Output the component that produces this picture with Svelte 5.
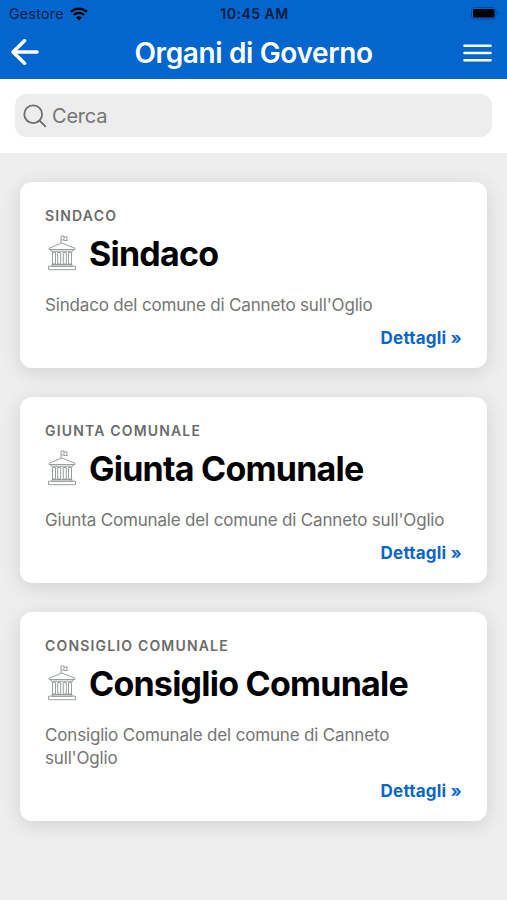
<script>
  const organi = [
    {
      categoria: "Sindaco",
      titolo: "Sindaco",
      descrizione: "Sindaco del comune di Canneto sull'Oglio"
    },
    {
      categoria: "Giunta Comunale",
      titolo: "Giunta Comunale",
      descrizione: "Giunta Comunale del comune di Canneto sull'Oglio"
    },
    {
      categoria: "Consiglio Comunale",
      titolo: "Consiglio Comunale",
      descrizione: "Consiglio Comunale del comune di Canneto sull'Oglio"
    }
  ];

  let cerca = $state("");

  let filtrati = $derived(
    organi.filter((o) => o.titolo.toLowerCase().includes(cerca.toLowerCase()))
  );
</script>

<main>
  <header class="header">
    <div class="status">
      <div class="status__carrier">
        <span>Gestore</span>
        <svg width="18" height="14" viewBox="0 0 18 14">
          <g fill="none" stroke="#000" stroke-width="2.3">
            <path d="M1 4.9a11.5 11.5 0 0 1 16 0" />
            <path d="M3.9 8a7.3 7.3 0 0 1 10.2 0" />
          </g>
          <path d="M9 13.6 6 10.6a4.3 4.3 0 0 1 6 0z" />
        </svg>
      </div>
      <span class="status__time">10:45 AM</span>
      <svg class="status__battery" width="29" height="13" viewBox="0 0 29 13">
        <rect x="0.5" y="0.5" width="24.5" height="11.6" rx="3" fill="none" stroke="#004a9c" />
        <rect x="2" y="2" width="21.5" height="8.6" rx="1.6" />
        <path d="M26.5 4.5q2 1.8 0 3.6z" fill="#003f85" />
      </svg>
    </div>
    <nav class="nav">
      <button class="nav__button" aria-label="Indietro">
        <svg width="28" height="26" viewBox="0 0 28 26">
          <path d="M13.500 1.800 2 13l11.500 11.200M2.500 13h23.500" fill="none" stroke="#fff" stroke-width="3.600" stroke-linecap="round" stroke-linejoin="round" />
        </svg>
      </button>
      <h1 class="nav__title">Organi di Governo</h1>
      <button class="nav__button nav__button--menu" aria-label="Menu">
        <svg width="29" height="18" viewBox="0 0 29 18">
          <path d="M1.500 1.800h26M1.500 9h26M1.500 16.200h26" stroke="#fff" stroke-width="2.600" stroke-linecap="round" />
        </svg>
      </button>
    </nav>
  </header>

  <div class="search">
    <label class="search__box">
      <svg width="24" height="24" viewBox="0 0 24 24">
        <g fill="none" stroke="#6e6e6e" stroke-width="1.800" stroke-linecap="round">
          <circle cx="10.200" cy="10.200" r="8.900" />
          <path d="m16.500 16.500 5.800 5.800" />
        </g>
      </svg>
      <input class="search__input" type="text" placeholder="Cerca" bind:value={cerca} />
    </label>
  </div>

  <section class="cards">
    {#each filtrati as organo}
      <article class="card">
        <h3 class="card__category">{organo.categoria}</h3>
        <div class="card__heading">
          <svg class="card__icon" width="30" height="36" viewBox="0 0 30 36">
            <g fill="none" stroke="#8f9494" stroke-width="0.900" stroke-linejoin="round">
              <path d="M14 8V1h3v4h-3M17 2h3.500l-1 1.700 1 1.800H17" />
              <path d="M15 8 2 13.300v1.200h26v-1.200z" />
              <path d="M4 14.500v1.700h22v-1.700M5 29.500h20v1.700H5z" />
              <path d="M5.500 17.500h3v11.500h-3zM10.700 17.500h3v11.500h-3zM16.300 17.500h3v11.500h-3zM21.500 17.500h3v11.500h-3z" />
              <path d="M1.500 31.200h27v3.500h-27z" />
            </g>
          </svg>
          <h2 class="card__title">{organo.titolo}</h2>
        </div>
        <p class="card__text">{organo.descrizione}</p>
        <a class="card__link" href="#dettagli">Dettagli »</a>
      </article>
    {/each}
  </section>
</main>

<style>
  :global(body) {
    margin: 0;
    background-color: #eee;
  }
  main {
    min-height: 900px;
    font-family: Inter, "Liberation Sans", sans-serif;
  }
  .header {
    height: 79px;
    background-color: #0365ce;
  }
  .status {
    display: grid;
    grid-template-columns: 1fr auto 1fr;
    align-items: center;
    height: 27px;
    padding: 0 7px 0 9px;
    font-size: 14px;
    color: #001a38;
  }
  .status__carrier {
    display: flex;
    align-items: center;
    gap: 6px;
    letter-spacing: 0.4px;
  }
  .status__time {
    font-weight: 600;
    letter-spacing: 0.5px;
  }
  .status__battery {
    justify-self: end;
  }
  .nav {
    display: flex;
    align-items: center;
    justify-content: space-between;
    height: 50px;
    padding: 0 15px 0 11px;
    box-sizing: border-box;
  }
  .nav__button {
    display: flex;
    padding: 0;
    border: 0;
    background: none;
  }
  .nav__button--menu {
    padding-top: 2px;
  }
  .nav__title {
    margin: 2px 0 0 5px;
    font-size: 28px;
    font-weight: 600;
    letter-spacing: -0.37px;
    color: #fff;
  }
  .search {
    height: 74px;
    padding: 15px;
    box-sizing: border-box;
    background-color: #fff;
  }
  .search__box {
    display: flex;
    align-items: center;
    gap: 5px;
    height: 43px;
    padding: 0 8px;
    border-radius: 12px;
    background-color: #ededed;
  }
  .search__input {
    flex: 1;
    padding: 0;
    border: 0;
    outline: 0;
    background: none;
    font-family: inherit;
    font-size: 20px;
    letter-spacing: -0.2px;
  }
  .search__input::placeholder {
    color: #757575;
    opacity: 1;
  }
  .cards {
    display: flex;
    flex-direction: column;
    gap: 29px;
    padding: 29px 20px;
  }
  .card {
    display: flex;
    flex-direction: column;
    padding: 25px 25px 20px;
    border-radius: 12px;
    background-color: #fff;
    box-shadow: 0 4px 20px rgba(0, 0, 0, 0.12);
  }
  .card__category {
    margin: 0;
    font-size: 14px;
    line-height: 18px;
    font-weight: 600;
    letter-spacing: 1.17px;
    text-transform: uppercase;
    color: #6b6b6b;
  }
  .card__heading {
    display: flex;
    align-items: center;
    gap: 12px;
    height: 42px;
    margin-top: 8px;
    padding-left: 2px;
  }
  .card__icon {
    margin-bottom: 2px;
  }
  .card__title {
    margin: 0;
    font-size: 34px;
    line-height: 42px;
    font-weight: 700;
    letter-spacing: -0.77px;
    color: #000;
    white-space: nowrap;
  }
  .card__text {
    margin: 19px 0 11px;
    font-size: 17px;
    line-height: 23px;
    letter-spacing: -0.17px;
    color: #757575;
  }
  .card__link {
    align-self: flex-end;
    font-size: 17px;
    line-height: 20px;
    font-weight: 700;
    letter-spacing: 0.2px;
    color: #0a66c8;
    text-decoration: none;
  }
</style>
